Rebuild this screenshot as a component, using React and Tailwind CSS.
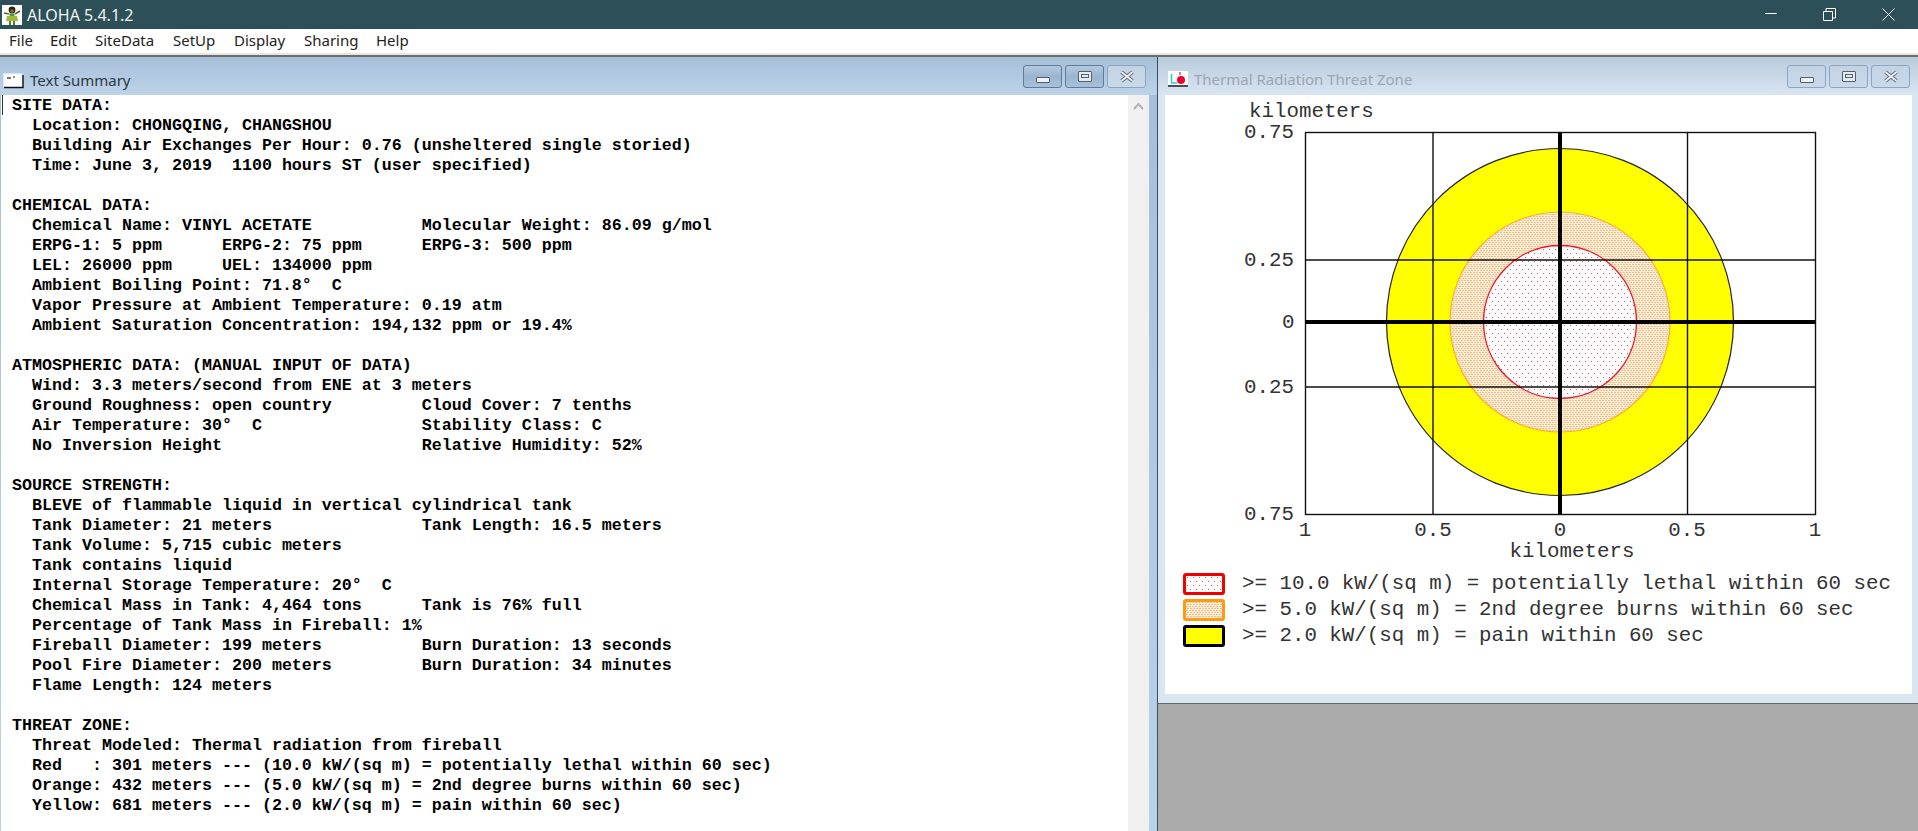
import React from 'react';

const menuItems = [
  ['File', 'w-[41px]'],
  ['Edit', 'w-[45px]'],
  ['SiteData', 'w-[78px]'],
  ['SetUp', 'w-[61px]'],
  ['Display', 'w-[70px]'],
  ['Sharing', 'w-[72px]'],
  ['Help', 'w-[60px]'],
];

const summary = `SITE DATA:
  Location: CHONGQING, CHANGSHOU
  Building Air Exchanges Per Hour: 0.76 (unsheltered single storied)
  Time: June 3, 2019  1100 hours ST (user specified)

CHEMICAL DATA:
  Chemical Name: VINYL ACETATE           Molecular Weight: 86.09 g/mol
  ERPG-1: 5 ppm      ERPG-2: 75 ppm      ERPG-3: 500 ppm
  LEL: 26000 ppm     UEL: 134000 ppm
  Ambient Boiling Point: 71.8°  C
  Vapor Pressure at Ambient Temperature: 0.19 atm
  Ambient Saturation Concentration: 194,132 ppm or 19.4%

ATMOSPHERIC DATA: (MANUAL INPUT OF DATA)
  Wind: 3.3 meters/second from ENE at 3 meters
  Ground Roughness: open country         Cloud Cover: 7 tenths
  Air Temperature: 30°  C                Stability Class: C
  No Inversion Height                    Relative Humidity: 52%

SOURCE STRENGTH:
  BLEVE of flammable liquid in vertical cylindrical tank
  Tank Diameter: 21 meters               Tank Length: 16.5 meters
  Tank Volume: 5,715 cubic meters
  Tank contains liquid
  Internal Storage Temperature: 20°  C
  Chemical Mass in Tank: 4,464 tons      Tank is 76% full
  Percentage of Tank Mass in Fireball: 1%
  Fireball Diameter: 199 meters          Burn Duration: 13 seconds
  Pool Fire Diameter: 200 meters         Burn Duration: 34 minutes
  Flame Length: 124 meters

THREAT ZONE:
  Threat Modeled: Thermal radiation from fireball
  Red   : 301 meters --- (10.0 kW/(sq m) = potentially lethal within 60 sec)
  Orange: 432 meters --- (5.0 kW/(sq m) = 2nd degree burns within 60 sec)
  Yellow: 681 meters --- (2.0 kW/(sq m) = pain within 60 sec)`;

const legend = [
  { text: '>= 10.0 kW/(sq m) = potentially lethal within 60 sec', border: 'border-[#f00000]', fill: 'url(#dotsRed)' },
  { text: '>= 5.0 kW/(sq m) = 2nd degree burns within 60 sec', border: 'border-[#ff9a10]', fill: 'url(#dotsOrange)' },
  { text: '>= 2.0 kW/(sq m) = pain within 60 sec', border: 'border-black', fill: '#ffff00' },
];

const HulaIcon = () => (
  <svg width="20" height="20" viewBox="0 0 20 20" className="mr-[5px] shrink-0">
    <rect width="20" height="20" fill="#fff" />
    <path d="M2 8 L7 9 M18 6 L13 9" stroke="#6b5a2a" strokeWidth="1.6" />
    <circle cx="10" cy="5" r="3.4" fill="#2b2410" />
    <circle cx="10" cy="6" r="1.8" fill="#8a6a3a" />
    <rect x="7.5" y="8.5" width="5" height="3" fill="#4f9a3a" />
    <path d="M5 11 L15 11 L16 16 L4 16 Z" fill="#9dbb3a" />
    <path d="M8 16 L8 20 M12 16 L12 20" stroke="#5c7a28" strokeWidth="2" />
  </svg>
);

const TextIcon = () => (
  <svg width="21" height="16" viewBox="0 0 21 16" className="mr-[6px] shrink-0">
    <rect x="0.5" y="0.5" width="19" height="14" fill="#fff" />
    <path d="M1 14.5 H20 V2" fill="none" stroke="#111" strokeWidth="1.4" />
    <path d="M5 4 V6 M7 4 V6 M10 4 H12" stroke="#222" strokeWidth="1.2" />
  </svg>
);

const ChartIcon = () => (
  <svg width="20" height="16" viewBox="0 0 20 16" className="mr-[6px] shrink-0">
    <rect width="20" height="14" fill="#fff" />
    <path d="M3.5 3 V12 H9" fill="none" stroke="#35c8d8" strokeWidth="1.6" />
    <path d="M12 1 V4" stroke="#e02040" strokeWidth="1.2" />
    <circle cx="13" cy="9" r="4" fill="#f0002a" />
    <path d="M0 15 H20" stroke="#111" strokeWidth="1.4" />
  </svg>
);

// small Aero caption button, the glyph depends on the kind
const CaptionButton = ({ kind, faded }) => (
  <div className={`relative h-[23px] w-[39px] flex items-center justify-center rounded-[3px] border ${faded ? 'border-[#8da6c0] bg-gradient-to-b from-[#c3d3e4] to-[#c9d9ea]' : 'border-[#5f7c9b] bg-gradient-to-b from-[#b4c9df] via-[#9ab5d1] to-[#a8c0da]'}`}>
    {kind === 'min' && <div className="mt-[7px] h-[6px] w-[14px] rounded-[1px] border border-[#53606e] bg-[#eef2f6]" />}
    {kind === 'max' && (
      <div className="flex h-[11px] w-[14px] items-center justify-center rounded-[1px] border border-[#53606e] bg-[#e6ebf1]">
        <div className="h-[4px] w-[8px] border border-[#53606e]" />
      </div>
    )}
    {kind === 'close' && (
      <svg width="16" height="13" viewBox="0 0 16 13">
        <path d="M2.5 2 L13.5 11 M13.5 2 L2.5 11" stroke="#5d6b7a" strokeWidth="3.6" />
        <path d="M2.5 2 L13.5 11 M13.5 2 L2.5 11" stroke="#eef2f6" strokeWidth="1.8" />
      </svg>
    )}
  </div>
);

const CaptionButtons = ({ faded }) => (
  <div className="flex gap-[3px]">
    <CaptionButton kind="min" faded={faded} />
    <CaptionButton kind="max" faded={faded} />
    <CaptionButton kind="close" faded />
  </div>
);

const ThreatChart = () => {
  const cx = 1560;
  const cy = 322;
  const labelFont = { fontFamily: '"Liberation Mono", monospace', fontSize: 20.8, fill: '#333' };
  return (
    <svg width="747" height="465" viewBox="1165 95 747 465" className="block shrink-0">
      <defs>
        <pattern id="dotsRed" width="6" height="8" patternUnits="userSpaceOnUse">
          <rect width="6" height="8" fill="#fff" />
          <rect x="1" y="1" width="1" height="1" fill="#e8505a" />
          <rect x="4" y="5" width="1" height="1" fill="#e8505a" />
        </pattern>
        <pattern id="dotsOrange" width="3" height="4" patternUnits="userSpaceOnUse">
          <rect width="3" height="4" fill="#fbeedb" />
          <rect x="0" y="0" width="2" height="1" fill="#f4bd84" />
          <rect x="1" y="2" width="2" height="1" fill="#f4bd84" />
        </pattern>
      </defs>
      <circle cx={cx} cy={cy} r="173.5" fill="#ffff00" stroke="#222" strokeWidth="1.2" />
      <circle cx={cx} cy={cy} r="110" fill="url(#dotsOrange)" stroke="#ffab30" strokeWidth="1.2" />
      <circle cx={cx} cy={cy} r="76.5" fill="url(#dotsRed)" stroke="#ea1c2c" strokeWidth="1.4" />
      <g stroke="#111" strokeWidth="1.4" fill="none">
        <rect x="1305.5" y="132.5" width="510" height="382" />
        <path d="M1433 132 V514 M1687.5 132 V514 M1305 260 H1815 M1305 387 H1815" />
      </g>
      <path d={`M${cx} 132 V514 M1305 ${cy} H1815`} stroke="#000" strokeWidth="4" />
      <g {...labelFont}>
        <text x="1249" y="117">kilometers</text>
        <text x="1244" y="138">0.75</text>
        <text x="1244" y="266">0.25</text>
        <text x="1282" y="328">0</text>
        <text x="1244" y="393">0.25</text>
        <text x="1244" y="520">0.75</text>
        <text x="1305" y="536" textAnchor="middle">1</text>
        <text x="1433" y="536" textAnchor="middle">0.5</text>
        <text x="1560" y="536" textAnchor="middle">0</text>
        <text x="1687" y="536" textAnchor="middle">0.5</text>
        <text x="1815" y="536" textAnchor="middle">1</text>
        <text x="1572" y="557" textAnchor="middle">kilometers</text>
      </g>
    </svg>
  );
};

const App = () => (
  <div className="flex h-[831px] w-[1918px] flex-col overflow-hidden bg-white font-['Noto_Sans',sans-serif]">
    {/* application title bar */}
    <div className="flex h-[29px] shrink-0 items-center bg-[#2c4f58] pl-[2px] text-white">
      <HulaIcon />
      <span className="text-[16px] text-[#f2f5f6]">ALOHA 5.4.1.2</span>
      <svg width="153" height="29" viewBox="0 0 153 29" className="ml-auto text-white">
        <path d="M0 13.5 H12" stroke="currentColor" />
        <path d="M58.5 11.5 H67.5 V20.5 H58.5 Z M61 11 V8.5 H70.5 V18 H68" fill="none" stroke="currentColor" />
        <path d="M117.5 8.5 L129.5 20.5 M129.5 8.5 L117.5 20.5" stroke="currentColor" />
      </svg>
    </div>

    {/* menu bar */}
    <div className="flex h-[26px] shrink-0 items-center border-b-2 border-[#e9e6e2] bg-white pb-[1px] pl-[9px] text-[15px] text-[#222]">
      {menuItems.map(([label, width]) => (
        <span key={label} className={width}>{label}</span>
      ))}
    </div>

    {/* MDI client area */}
    <div className="flex min-h-0 flex-1 border-t-2 border-[#6d6d6d]">
      <div className="flex w-[1158px] shrink-0 flex-col border-r border-[#2f5166] bg-gradient-to-b from-[#a5bfda] to-[#b9d2ea]">
        <div className="flex h-[38px] shrink-0 items-center justify-between bg-gradient-to-b from-[#a6bfd9] to-[#bdd3e9] pl-[3px] pr-[11px]">
          <div className="flex items-center pt-[9px]">
            <TextIcon />
            <span className="text-[15px] text-[#2c3a44]">Text Summary</span>
          </div>
          <CaptionButtons />
        </div>
        <div className="flex min-h-0 flex-1 pl-[1px] pr-[8px]">
          <div className="relative min-w-0 flex-1 bg-white pl-[11px] pt-[1px]">
            <div className="absolute left-[1px] top-[0px] h-[20px] w-[1px] bg-[#333]" />
            <pre className="font-['Liberation_Mono',monospace] text-[16.67px] font-bold leading-[20px] text-black">{summary}</pre>
          </div>
          <div className="flex w-[21px] shrink-0 justify-center bg-[#f0f0f0] pt-[7px]">
            <svg width="11" height="8" viewBox="0 0 11 8">
              <path d="M1 7 L5.5 2 L10 7" fill="none" stroke="#b4b4b4" strokeWidth="2" />
            </svg>
          </div>
        </div>
      </div>

      <div className="flex min-w-0 flex-1 flex-col">
        <div className="flex h-[646px] shrink-0 flex-col bg-[#d9e5f1]">
          <div className="flex h-[38px] shrink-0 items-center justify-between bg-gradient-to-b from-[#b9cbdd] to-[#d9e5f2] pl-[10px] pr-[8px]">
            <div className="flex items-center pt-[6px]">
              <ChartIcon />
              <span className="text-[15px] text-[#9aa6b0]">Thermal Radiation Threat Zone</span>
            </div>
            <CaptionButtons faded />
          </div>
          <div className="ml-[7px] mr-[6px] mb-[9px] flex min-h-0 flex-1 flex-col bg-white">
            <ThreatChart />
            <div className="ml-[18px] mt-[13px] flex flex-col gap-[4px] font-['Liberation_Mono',monospace] text-[20.8px] leading-[22px] text-[#333]">
              {legend.map((row) => (
                <div key={row.text} className="flex items-center">
                  <div className={`mr-[17px] h-[22px] w-[42px] shrink-0 overflow-hidden rounded-[3px] border-[3px] ${row.border}`}>
                    <svg width="36" height="16" className="block">
                      <rect width="36" height="16" fill={row.fill} />
                    </svg>
                  </div>
                  <span className="whitespace-pre">{row.text}</span>
                </div>
              ))}
            </div>
          </div>
        </div>
        <div className="min-h-0 flex-1 border-t border-[#5f6468] bg-[#aaaaaa]" />
      </div>
    </div>
  </div>
);

export default App;
